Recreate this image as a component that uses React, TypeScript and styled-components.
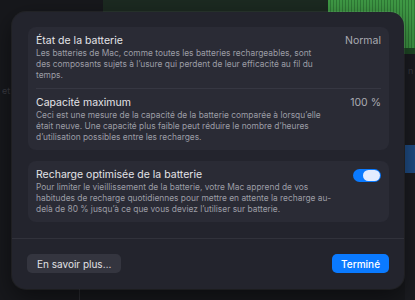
import React from 'react';
import styled, { createGlobalStyle } from 'styled-components';

const GlobalStyle = createGlobalStyle`
    html, body {
        margin: 0;
        padding: 0;
        background: #17181c;
    }
    * {
        box-sizing: border-box;
    }
`;

const Page = styled.div`
    position: relative;
    width: 415px;
    height: 300px;
    overflow: hidden;
    padding: 12px 11px 11px 12px;
    font-family: Inter, "Noto Sans", sans-serif;
    -webkit-font-smoothing: antialiased;
`;

/* desktop behind the sheet */
const Backdrop = styled.div<{ $x: number; $y: number; $w: number; $h: number; $bg: string }>`
    position: absolute;
    left: ${({ $x }) => $x}px;
    top: ${({ $y }) => $y}px;
    width: ${({ $w }) => $w}px;
    height: ${({ $h }) => $h}px;
    background: ${({ $bg }) => $bg};
`;

const StripedGreen = styled(Backdrop)`
    background: repeating-linear-gradient(90deg, #3f9a45 0 2px, #2f7a36 2px 3px);
    border-bottom: 6px solid #1f4a26;
`;

const FaintText = styled.span<{ $x: number; $y: number }>`
    position: absolute;
    left: ${({ $x }) => $x}px;
    top: ${({ $y }) => $y}px;
    font-size: 9px;
    color: #3a3b42;
`;

const Sheet = styled.div`
    position: relative;
    width: 392px;
    height: 277px;
    background: #23242d;
    border-radius: 14px;
    box-shadow: 0 0 0 1px rgba(255, 255, 255, 0.06), 0 8px 24px rgba(0, 0, 0, 0.5);
    display: flex;
    flex-direction: column;
`;

const Content = styled.div`
    display: flex;
    flex-direction: column;
    gap: 11px;
    padding: 15px 15px 16px 16px;
    border-bottom: 1px solid #31323b;
`;

const Group = styled.div`
    background: #2a2b35;
    border-radius: 8px;
    padding: 0 8px;
    display: flex;
    flex-direction: column;
`;

const Row = styled.div<{ $divider?: boolean }>`
    display: flex;
    justify-content: space-between;
    align-items: flex-start;
    padding: 7px 0 7px;
    border-top: ${({ $divider }) => ($divider ? '1px solid #363742' : 'none')};
`;

const RowText = styled.div`
    display: flex;
    flex-direction: column;
`;

const Title = styled.div`
    font-size: 10.5px;
    line-height: 14px;
    color: #e4e4e8;
`;

const Description = styled.div`
    font-size: 8.4px;
    line-height: 11px;
    color: #9c9da5;
`;

const Value = styled.div`
    font-size: 10.5px;
    line-height: 14px;
    color: #a9aab1;
`;

const Switch = styled.div<{ $on: boolean }>`
    width: 28px;
    height: 13px;
    margin-top: 1px;
    border-radius: 7px;
    background: ${({ $on }) => ($on ? '#0a7aff' : '#44454f')};
    display: flex;
    align-items: center;
    justify-content: ${({ $on }) => ($on ? 'flex-end' : 'flex-start')};
    padding: 0 1px;
`;

const Knob = styled.div`
    width: 17px;
    height: 11px;
    border-radius: 6px;
    background: #e3ecff;
`;

const Footer = styled.div`
    display: flex;
    justify-content: space-between;
    align-items: center;
    padding: 15px 15px 0 15px;
`;

const Button = styled.button<{ $primary?: boolean }>`
    height: 19px;
    border: none;
    border-radius: 5px;
    padding: 0 ${({ $primary }) => ($primary ? '9px' : '10px')};
    font-family: Inter, "Noto Sans", sans-serif;
    font-size: 10px;
    font-weight: ${({ $primary }) => ($primary ? 500 : 400)};
    color: ${({ $primary }) => ($primary ? '#ffffff' : '#e2e2e6')};
    background: ${({ $primary }) => ($primary ? '#0a7aff' : '#34353f')};
`;

const App = () => {
    return (
        <>
            <GlobalStyle />
            <Page>
                <Backdrop $x={103} $y={0} $w={225} $h={14} $bg="#1c2a21" />
                <StripedGreen $x={328} $y={0} $w={87} $h={54} $bg="" />
                <Backdrop $x={405} $y={54} $w={10} $h={246} $bg="#1b1c21" />
                <Backdrop $x={405} $y={145} $w={10} $h={28} $bg="#1f4d86" />
                <Backdrop $x={79} $y={289} $w={1} $h={11} $bg="#2a2b30" />
                <FaintText $x={2} $y={85}>et</FaintText>
                <FaintText $x={408} $y={65}>n</FaintText>

                <Sheet>
                    <Content>
                        <Group>
                            <Row>
                                <RowText>
                                    <Title>État de la batterie</Title>
                                    <Description>
                                        Les batteries de Mac, comme toutes les batteries rechargeables, sont<br />
                                        des composants sujets à l’usure qui perdent de leur efficacité au fil du<br />
                                        temps.
                                    </Description>
                                </RowText>
                                <Value>Normal</Value>
                            </Row>
                            <Row $divider>
                                <RowText>
                                    <Title>Capacité maximum</Title>
                                    <Description>
                                        Ceci est une mesure de la capacité de la batterie comparée à lorsqu’elle<br />
                                        était neuve. Une capacité plus faible peut réduire le nombre d’heures<br />
                                        d’utilisation possibles entre les recharges.
                                    </Description>
                                </RowText>
                                <Value>100 %</Value>
                            </Row>
                        </Group>
                        <Group>
                            <Row>
                                <RowText>
                                    <Title>Recharge optimisée de la batterie</Title>
                                    <Description>
                                        Pour limiter le vieillissement de la batterie, votre Mac apprend de vos<br />
                                        habitudes de recharge quotidiennes pour mettre en attente la recharge au-<br />
                                        delà de 80 % jusqu’à ce que vous deviez l’utiliser sur batterie.
                                    </Description>
                                </RowText>
                                <Switch $on>
                                    <Knob />
                                </Switch>
                            </Row>
                        </Group>
                    </Content>
                    <Footer>
                        <Button>En savoir plus…</Button>
                        <Button $primary>Terminé</Button>
                    </Footer>
                </Sheet>
            </Page>
        </>
    );
};

export default App;
